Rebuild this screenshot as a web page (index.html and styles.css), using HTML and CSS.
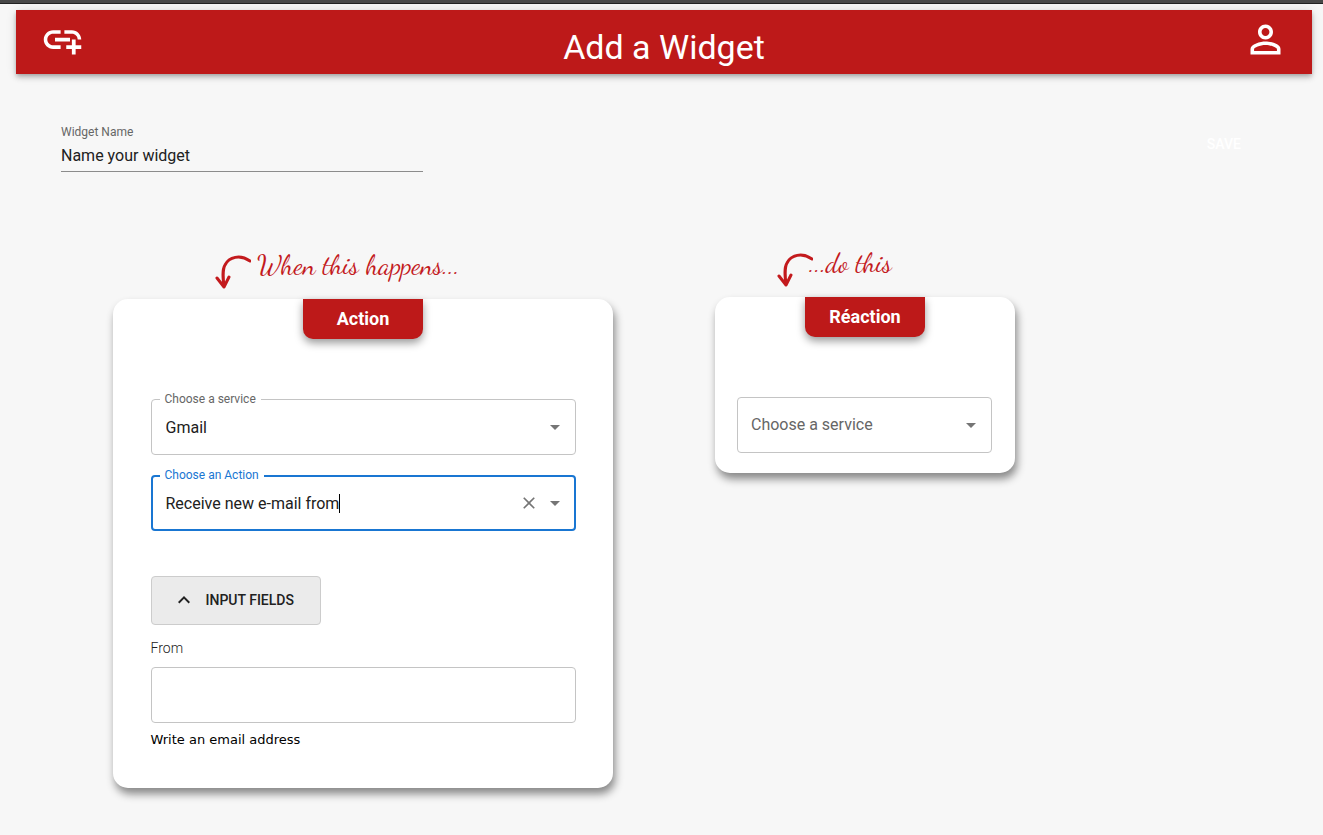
FILE: index.html
```html
<!DOCTYPE html>
<html lang="en">
<head>
<meta charset="utf-8">
<title>Add a Widget</title>
<link rel="stylesheet" href="styles.css">
</head>
<body>
<header class="topbar">
  <a class="icon-link" href="#" aria-label="Widgets">
    <svg class="icon-large" viewBox="0 0 24 24"><path d="M8 11h8v2H8v-2zm12.1 1H22c0-2.76-2.24-5-5-5h-4v1.9h4c1.71 0 3.1 1.39 3.1 3.1zM3.9 12c0-1.71 1.39-3.1 3.1-3.1h4V7H7c-2.76 0-5 2.24-5 5s2.24 5 5 5h4v-1.9H7c-1.71 0-3.1-1.39-3.1-3.1zM19 12h-2v3h-3v2h3v3h2v-3h3v-2h-3v-3z"/></svg>
  </a>
  <h1 class="title">Add a Widget</h1>
  <a class="icon-link" href="#" aria-label="Profile">
    <svg class="icon-large" viewBox="0 0 24 24"><path d="M12 5.9c1.16 0 2.1.94 2.1 2.1s-.94 2.1-2.1 2.1S9.9 9.16 9.9 8s.94-2.1 2.1-2.1m0 9c2.97 0 6.1 1.46 6.1 2.1v1.1H5.9V17c0-.64 3.13-2.1 6.1-2.1M12 4C9.79 4 8 5.79 8 8s1.79 4 4 4 4-1.79 4-4-1.79-4-4-4zm0 9c-2.67 0-8 1.34-8 4v3h16v-3c0-2.66-5.33-4-8-4z"/></svg>
  </a>
</header>
<main>
  <div class="name-row">
    <div class="name-field">
      <label class="small-label" for="widget-name">Widget Name</label>
      <input class="name-input" id="widget-name" type="text" value="Name your widget">
    </div>
    <button class="save" type="button">Save</button>
  </div>
  <div class="columns">
    <section class="column column-action">
      <p class="caption caption-action">
        <svg class="arrow" viewBox="0 0 36 34"><path d="M35 6C25 -1 14 2 10 10C7 15 8 23 9 32M2 23L9 32L14 22"/></svg>
        <span>When this happens...</span>
      </p>
      <div class="card">
        <h2 class="tab">Action</h2>
        <div class="card-body">
          <fieldset class="outlined">
            <legend><label for="service">Choose a service</label></legend>
            <div class="control">
              <select id="service"><option>Gmail</option></select>
              <svg class="icon caret-down" viewBox="0 0 24 24"><path d="M7 10l5 5 5-5z"/></svg>
            </div>
          </fieldset>
          <fieldset class="outlined focused">
            <legend><label for="action">Choose an Action</label></legend>
            <div class="control">
              <input class="combo" id="action" type="text" role="combobox" aria-expanded="false" value="Receive new e-mail from">
              <span class="text-cursor"></span>
              <button class="icon-button clear" type="button" aria-label="Clear"><svg class="icon-small" viewBox="0 0 24 24"><path d="M19 6.41L17.59 5 12 10.59 6.41 5 5 6.41 10.59 12 5 17.59 6.41 19 12 13.41 17.59 19 19 17.59 13.41 12z"/></svg></button>
              <button class="icon-button" type="button" aria-label="Open"><svg class="icon" viewBox="0 0 24 24"><path d="M7 10l5 5 5-5z"/></svg></button>
            </div>
          </fieldset>
          <button class="toggle" type="button" aria-expanded="true">
            <svg class="icon" viewBox="0 0 24 24"><path d="M7.41 15.41L12 10.83l4.59 4.58L18 14l-6-6-6 6z"/></svg>
            <span>Input fields</span>
          </button>
          <label class="from-label" for="from">From</label>
          <input class="from-input" id="from" type="text" aria-describedby="from-help">
          <p class="help" id="from-help">Write an email address</p>
        </div>
      </div>
    </section>
    <section class="column column-reaction">
      <p class="caption caption-reaction">
        <svg class="arrow" viewBox="0 0 36 34"><path d="M35 6C25 -1 14 2 10 10C7 15 8 23 9 32M2 23L9 32L14 22"/></svg>
        <span>...do this</span>
      </p>
      <div class="card">
        <h2 class="tab">Réaction</h2>
        <div class="card-body card-body-short">
          <div class="outlined-plain control">
            <select id="reaction" aria-label="Choose a service"><option>Choose a service</option></select>
            <svg class="icon caret-down" viewBox="0 0 24 24"><path d="M7 10l5 5 5-5z"/></svg>
          </div>
        </div>
      </div>
    </section>
  </div>
</main>
</body>
</html>
```
FILE: styles.css
```css
* { box-sizing: border-box; }

body {
  margin: 0;
  border-top: 3px solid #484848;
  background: #f7f7f7;
  color: #212121;
  font-family: Roboto, "Liberation Sans", sans-serif;
  font-size: 16px;
}
body::before {
  content: "";
  display: block;
  height: 1px;
  background: #222;
}

h1, h2, p { margin: 0; }

button, input, select { font: inherit; color: inherit; }

svg { display: block; fill: currentColor; flex: none; }
.icon-large { width: 45px; height: 45px; }
.icon { width: 24px; height: 24px; }
.icon-small { width: 20px; height: 20px; }

.topbar {
  display: flex;
  justify-content: space-between;
  margin: 6px 11px 0 16px;
  padding: 7px 24px 0;
  height: 64px;
  background: #bd1919;
  color: #fff;
  box-shadow: 0 2px 4px -1px rgba(0, 0, 0, .2), 0 4px 5px rgba(0, 0, 0, .14), 0 1px 10px rgba(0, 0, 0, .12);
}
.icon-link { color: inherit; }
.title { padding-top: 9px; font-size: 34px; line-height: 42px; font-weight: 400; }

.name-row {
  display: flex;
  justify-content: space-between;
  align-items: flex-start;
  padding: 50px 66px 0 61px;
}
.name-field { display: flex; flex-direction: column; flex: 0 1 362px; }
.small-label { font-size: 12px; line-height: 16px; color: #666; }
.name-input {
  width: 100%;
  height: 32px;
  padding: 0;
  border: 0;
  border-bottom: 1px solid #8c8c8c;
  background: none;
  outline: 0;
}
.save {
  margin-top: 2px;
  padding: 6px 16px;
  border: 0;
  background: none;
  color: #fff;
  font-size: 14px;
  line-height: 24px;
  font-weight: 500;
  text-transform: uppercase;
}

.columns {
  display: flex;
  align-items: flex-start;
  gap: 102px;
  padding: 75px 16px 32px 113px;
}
.column-action { flex: 0 1 500px; margin-top: 2px; }
.column-reaction { flex: 0 1 300px; }

.caption {
  display: flex;
  height: 50px;
  color: #c31a1d;
  font-family: "Dancing Script", cursive;
  font-size: 27px;
  line-height: 34px;
  white-space: nowrap;
}
.caption-action { gap: 6px; margin-left: 102px; }
.caption-reaction { margin-left: 62px; }
.caption-reaction span { margin-left: -4px; }
.arrow {
  width: 36px;
  height: 34px;
  margin-top: 6px;
  fill: none;
  stroke: currentColor;
  stroke-width: 3;
  stroke-linecap: round;
  stroke-linejoin: round;
}

.card {
  border-radius: 15px;
  background: #fff;
  box-shadow: 2px 6px 8px rgba(0, 0, 0, .45);
}
.tab {
  width: 120px;
  margin: 0 auto;
  border-radius: 0 0 10px 10px;
  background: #bd1919;
  color: #fff;
  font-size: 18px;
  line-height: 40px;
  font-weight: 700;
  text-align: center;
  box-shadow: 0 4px 8px rgba(0, 0, 0, .4);
}
.card-body {
  display: flex;
  flex-direction: column;
  align-items: flex-start;
  width: 85%;
  margin: 0 auto;
  padding: 54px 0 40px;
}
.card-body-short { margin-left: 22px; padding: 60px 0 20px; }

.outlined {
  width: 100%;
  min-width: 0;
  margin: 0 0 14px;
  padding: 0 0 6px;
  border: 1px solid #c4c4c4;
  border-radius: 4px;
}
.outlined legend {
  margin-left: 8px;
  padding: 0 5px;
  color: #666;
  font-size: 12px;
  line-height: 12px;
}
.outlined label { display: block; }
.outlined .control { padding-top: 1px; height: 43px; }
.outlined.focused { margin-bottom: 45px; padding-bottom: 5px; border: 2px solid #1976d2; }
.focused legend { margin-left: 7px; padding-bottom: 2px; color: #1976d2; }

.control { display: flex; align-items: center; padding: 0 8px 0 14px; }
.outlined.focused .control { height: 41px; padding: 0 7px 1px 13px; }
.control select, .combo {
  min-width: 0;
  padding: 0;
  border: 0;
  outline: 0;
  background: none;
  appearance: none;
}
.control select { flex: 1; height: 100%; }
.combo { field-sizing: content; }
.text-cursor { width: 1px; height: 19px; background: #000; }
.caret-down { color: #757575; pointer-events: none; }
.icon-button { padding: 0; border: 0; background: none; color: #757575; }
.clear { margin: 0 4px 0 auto; }

.outlined-plain {
  width: 100%;
  height: 56px;
  border: 1px solid #c4c4c4;
  border-radius: 4px;
  color: #666;
  padding-left: 13px;
}
.outlined-plain select { padding-bottom: 2px; }

.toggle {
  display: flex;
  align-items: center;
  gap: 10px;
  min-width: 170px;
  height: 49px;
  padding: 0 20px 2px;
  border: 1px solid #ccc;
  border-radius: 4px;
  background: #ebebeb;
  font-size: 14px;
  font-weight: 500;
  text-transform: uppercase;
}
.from-label { margin: 13px 0 9px; font-size: 14px; line-height: 20px; font-weight: 300; }
.from-input {
  width: 100%;
  height: 56px;
  padding: 0 14px;
  border: 1px solid #c4c4c4;
  border-radius: 4px;
  background: #fff;
}
.help {
  padding-top: 8px;
  color: #000;
  font-family: "DejaVu Sans", sans-serif;
  font-size: 13px;
  line-height: 17px;
}
```
